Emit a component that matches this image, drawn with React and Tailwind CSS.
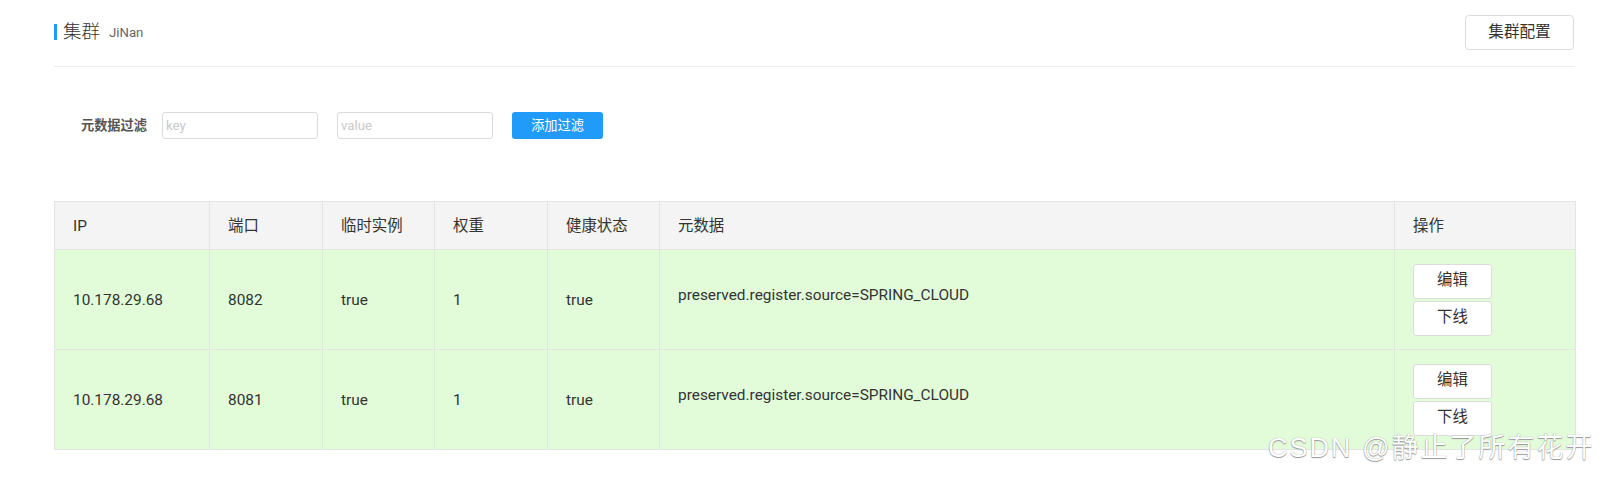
import React from "react";

const rows = [
  { ip: "10.178.29.68", port: "8082", ephemeral: "true", weight: "1", healthy: "true", meta: "preserved.register.source=SPRING_CLOUD" },
  { ip: "10.178.29.68", port: "8081", ephemeral: "true", weight: "1", healthy: "true", meta: "preserved.register.source=SPRING_CLOUD" },
];

const headers = ["IP", "端口", "临时实例", "权重", "健康状态", "元数据", "操作"];
const widths = ["w-[155px]", "w-[113px]", "w-[112px]", "w-[113px]", "w-[112px]", "w-[735px]", "w-[181px]"];

const App = () => {
  return (
    <div className="relative w-[1599px] h-[479px] bg-white overflow-hidden text-[#333] font-['Roboto','Noto_Sans_CJK_SC',sans-serif]">
      <div className="ml-[54px] w-[1521px]">
        {/* title bar */}
        <div className="flex items-center justify-between pt-[15px] pb-[16px] border-b border-[#eeeeee]">
          <div className="flex items-center">
            <div className="w-[3px] h-[16px] bg-[#209bfa]" />
            <span className="ml-[6px] text-[18.5px] leading-none font-light text-[#333]">集群</span>
            <span className="ml-[9px] text-[13.2px] text-[#666]">JiNan</span>
          </div>
          <button className="w-[109px] h-[35px] mr-[1px] border border-[#dcdcdc] rounded-[4px] bg-white text-[15.6px] text-[#333]">
            集群配置
          </button>
        </div>

        {/* filter */}
        <div className="flex items-center mt-[45px] ml-[27px]">
          <span className="text-[13.2px] font-semibold text-[#555] w-[81px] whitespace-nowrap">元数据过滤</span>
          <input
            placeholder="key"
            className="w-[156px] h-[27px] px-[3px] border border-[#dcdcdc] rounded-[3px] text-[13.2px] placeholder:text-[#c8c8c8] outline-none"
          />
          <input
            placeholder="value"
            className="ml-[19px] w-[156px] h-[27px] px-[3px] border border-[#dcdcdc] rounded-[3px] text-[13.2px] placeholder:text-[#c8c8c8] outline-none"
          />
          <button className="ml-[19px] w-[91px] h-[27px] rounded-[3px] bg-[#209bfa] text-white text-[13.2px]">
            添加过滤
          </button>
        </div>

        {/* table */}
        <table className="mt-[62px] w-[1521px] table-fixed border-collapse text-[15.4px]">
          <thead>
            <tr className="h-[48px] bg-[#f4f4f4]">
              {headers.map((h, i) => (
                <th key={h} className={`${widths[i]} border border-[#e4e4e4] pl-[18px] pt-[2px] text-left font-normal text-[#333]`}>
                  {h}
                </th>
              ))}
            </tr>
          </thead>
          <tbody>
            {rows.map((r, idx) => (
              <tr key={idx} className="h-[100px] bg-[#e2fcd9]">
                <td className="border border-[#e4e4e4] pl-[18px] pt-[2px]">{r.ip}</td>
                <td className="border border-[#e4e4e4] pl-[18px] pt-[2px]">{r.port}</td>
                <td className="border border-[#e4e4e4] pl-[18px] pt-[2px]">{r.ephemeral}</td>
                <td className="border border-[#e4e4e4] pl-[18px] pt-[2px]">{r.weight}</td>
                <td className="border border-[#e4e4e4] pl-[18px] pt-[2px]">{r.healthy}</td>
                <td className="border border-[#e4e4e4] pl-[18px] pb-[8px]">{r.meta}</td>
                <td className="border border-[#e4e4e4] pl-[18px]">
                  <div className="flex flex-col gap-[2px] w-[79px]">
                    <button className="h-[35px] bg-white border border-[#dcdcdc] rounded-[3px] text-[15.4px] text-[#333]">编辑</button>
                    <button className="h-[35px] bg-white border border-[#dcdcdc] rounded-[3px] text-[15.4px] text-[#333]">下线</button>
                  </div>
                </td>
              </tr>
            ))}
          </tbody>
        </table>
      </div>

      {/* watermark */}
      <div className="absolute left-[1268px] top-[435px] text-[27px] leading-[27px] tracking-[2px] text-white whitespace-nowrap [text-shadow:0_0_1px_#8a8a8a,0_1px_1px_#9a9a9a] font-['Liberation_Sans','Noto_Sans_CJK_SC',sans-serif]">
        CSDN @静止了所有花开
      </div>
    </div>
  );
};

export default App;
